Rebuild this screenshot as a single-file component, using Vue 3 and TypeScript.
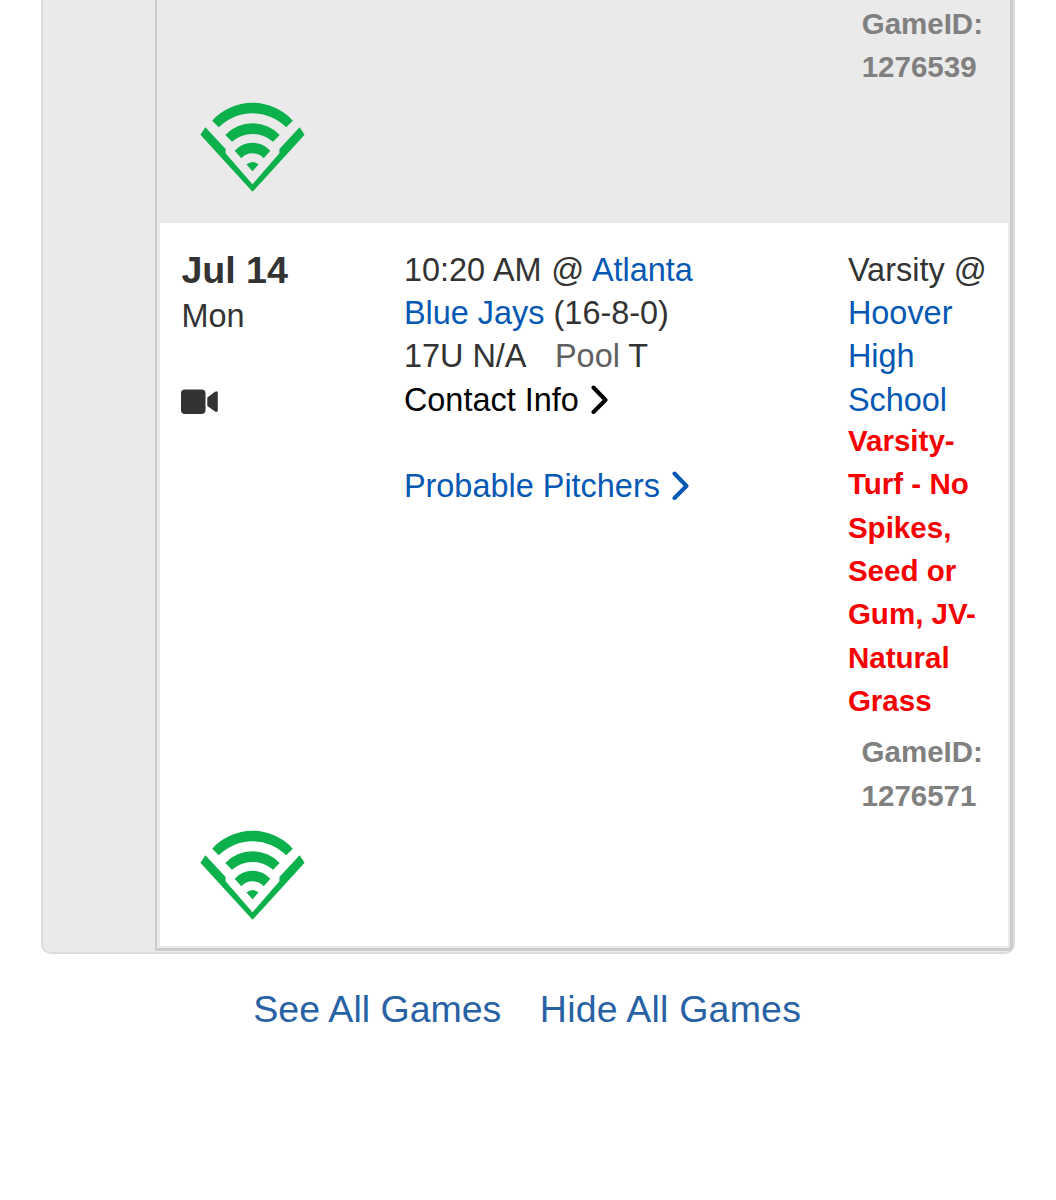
<script setup lang="ts">
interface Game {
  id: string
  month: string
  day: string
  time: string
  opponent: string[]
  record: string
  division: string
  pool: string
  field: string
  venue: string[]
  notes: string[]
}

const previousGameId = '1276539'

const game: Game = {
  id: '1276571',
  month: 'Jul 14',
  day: 'Mon',
  time: '10:20 AM',
  opponent: ['Atlanta', 'Blue Jays'],
  record: '(16-8-0)',
  division: '17U N/A',
  pool: 'T',
  field: 'Varsity',
  venue: ['Hoover', 'High', 'School'],
  notes: ['Varsity-', 'Turf - No', 'Spikes,', 'Seed or', 'Gum, JV-', 'Natural', 'Grass'],
}
</script>

<template>
  <main class="page">
    <section class="panel">
      <div class="schedule">
        <article class="row previous">
          <div class="game-id"><div>GameID:</div><div>{{ previousGameId }}</div></div>
          <svg class="signal" viewBox="0 0 105 90"><use href="#diamond-signal" /></svg>
        </article>

        <article class="row current">
          <div class="columns">
            <div class="date">
              <div class="month">{{ game.month }}</div>
              <div>{{ game.day }}</div>
              <svg class="camera" viewBox="0 0 37 26">
                <rect x="0" y="0.5" width="24.5" height="24.5" rx="4" />
                <path d="M26.3 8.5 34 2.7Q36.8 1.2 36.8 4V21Q36.8 24 34 22.6L26.3 17Z" />
              </svg>
            </div>
            <div class="details">
              <div class="matchup">{{ game.time }} @ <a>{{ game.opponent[0] }}</a></div>
              <div><a>{{ game.opponent[1] }}</a> {{ game.record }}</div>
              <div>{{ game.division }}<span class="pool">Pool</span> {{ game.pool }}</div>
              <div class="action contact">
                Contact Info
                <svg class="chevron" viewBox="0 0 18 30"><path d="M2.5 2.5 14.5 15 2.5 27" /></svg>
              </div>
              <div class="action pitchers">
                Probable Pitchers
                <svg class="chevron" viewBox="0 0 18 30"><path d="M2.5 2.5 14.5 15 2.5 27" /></svg>
              </div>
            </div>
            <div class="location">
              <div>{{ game.field }} @</div>
              <div v-for="word in game.venue" :key="word"><a>{{ word }}</a></div>
              <div class="notes"><div v-for="note in game.notes" :key="note">{{ note }}</div></div>
              <div class="game-id"><div>GameID:</div><div>{{ game.id }}</div></div>
            </div>
          </div>
          <svg class="signal" viewBox="0 0 105 90">
            <defs>
              <g id="diamond-signal">
                <path d="M12.2 18.7A54.1 54.1 0 0 1 92.8 18.7L86.2 25.3A47.6 47.6 0 0 0 18.8 25.3Z" />
                <path d="M25.3 33A37.5 37.5 0 0 1 79.7 33L73.1 39.7A31.4 31.4 0 0 0 31.9 39.7Z" />
                <path d="M34.7 48.7A23.8 23.8 0 0 1 70.3 48.7L63.7 56.3A15 15 0 0 0 41.3 56.3Z" />
                <path d="M46.5 62.5Q52.5 57.5 58.5 62.5L52.5 69.2Z" />
                <path d="M5.4 25.3 25.6 47V51.3L52.5 82.3 79.4 51.3V47L99.6 25.3 104.6 32.8 52.5 89.8.4 32.8Z" />
              </g>
            </defs>
            <use href="#diamond-signal" />
          </svg>
        </article>
      </div>
    </section>
    <nav class="links"><a>See All Games</a><a class="hide">Hide All Games</a></nav>
  </main>
</template>

<style>
body {
  margin: 0;
  background: #fff;
}
</style>

<style scoped>
.page {
  height: 1200px;
  overflow: hidden;
  font-family: "Liberation Sans", Arial, sans-serif;
  font-size: 32.45px;
  line-height: 43.3px;
  color: #333;
  white-space: nowrap;
}
.panel {
  box-sizing: border-box;
  width: 974px;
  height: 954px;
  margin-left: 41px;
  padding-left: 112px;
  border: 2px solid #dcdcdc;
  border-top: 0;
  border-radius: 0 0 10px 10px;
  background: #eaeaea;
}
.schedule {
  box-sizing: border-box;
  width: 858px;
  height: 951px;
  border: 3px solid #ccc;
  border-top: 0;
  border-left-width: 2px;
  border-bottom-right-radius: 5px;
  background: #eaeaea;
}
.row {
  box-sizing: border-box;
  margin-left: 3px;
  width: 847.5px;
}
.previous {
  height: 223px;
  padding-top: 2px;
}
.previous .game-id {
  margin: 0 0 0 701.7px;
}
.current {
  height: 723px;
  padding-top: 25px;
  background: #fff;
}
.columns {
  display: grid;
  grid-template-columns: 222.5px 444px 1fr;
  padding-left: 21.4px;
}
.details,
.location {
  padding-top: 0.8px;
}
a {
  color: #0558b3;
}
.matchup {
  word-spacing: 0.6px;
}
.month {
  height: 45.5px;
  margin-top: 1px;
  font-size: 37.6px;
  font-weight: 700;
}
.camera {
  display: block;
  width: 37px;
  height: 26px;
  margin-top: 51px;
  fill: #333;
}
.pool {
  margin-left: 28.5px;
  color: #606060;
}
.action {
  display: flex;
  align-items: center;
  gap: 12.5px;
}
.contact {
  color: #000;
}
.pitchers {
  margin-top: 43.3px;
  color: #0558b3;
}
.chevron {
  width: 18px;
  height: 30px;
  margin-top: -1.6px;
  fill: none;
  stroke: currentColor;
  stroke-width: 4;
  stroke-linecap: round;
  stroke-linejoin: round;
}
.notes {
  margin-top: -2.8px;
  font-size: 29.55px;
  font-weight: 700;
  color: #f70000;
}
.game-id {
  margin: 8px 0 0 13.7px;
  font-size: 29.5px;
  font-weight: 700;
  color: #808080;
}
.signal {
  display: block;
  width: 105px;
  height: 90px;
  margin: 13.2px 0 0 40px;
  fill: #0cb14b;
}
.links {
  display: flex;
  gap: 38.5px;
  margin: 34px 0 0 253.3px;
  font-size: 37.5px;
}
.links a {
  color: #2862a5;
}
.links .hide {
  letter-spacing: 0.2px;
}
</style>
